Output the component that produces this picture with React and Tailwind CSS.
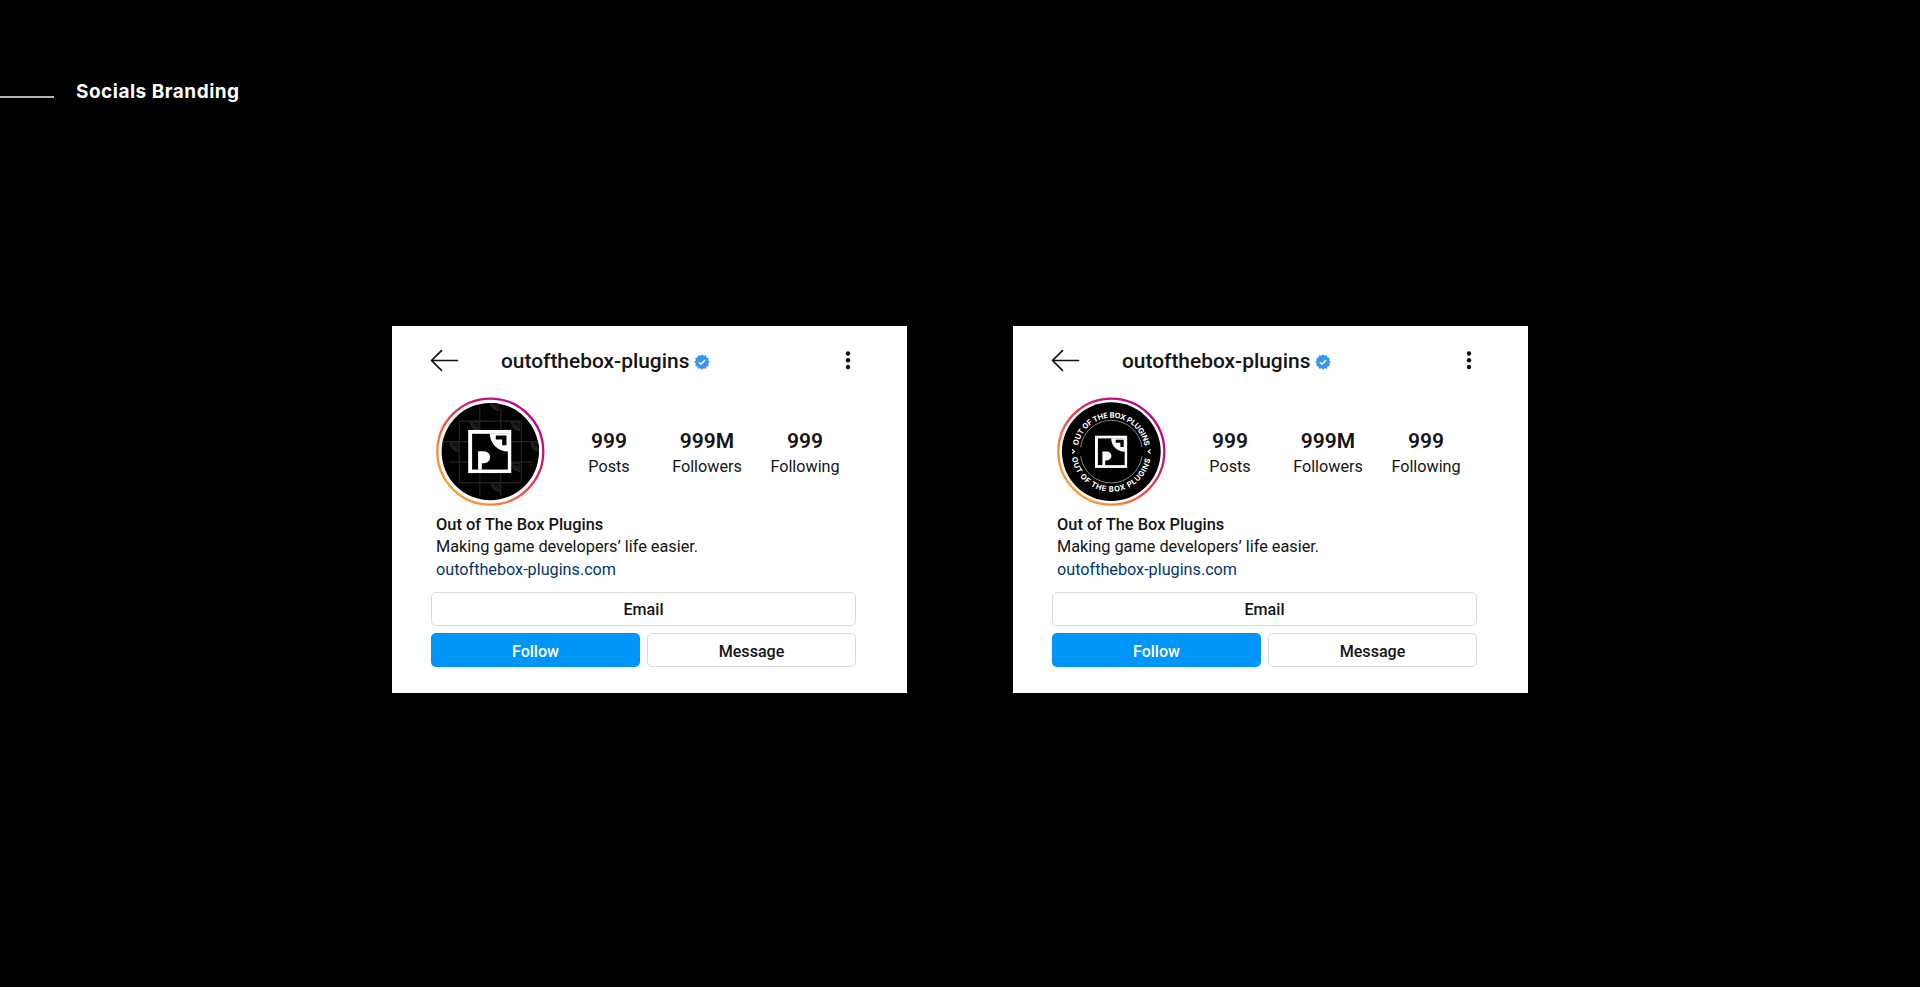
import React from "react";

const profile = {
  handle: "outofthebox-plugins",
  name: "Out of The Box Plugins",
  bio: "Making game developers’ life easier.",
  link: "outofthebox-plugins.com",
};

const stats = [
  { value: "999", label: "Posts", width: "w-[72px]" },
  { value: "999M", label: "Followers", width: "w-[124px]" },
  { value: "999", label: "Following", width: "w-[72px]" },
];

export default function App() {
  return (
    <main className="w-[1920px] h-[987px] overflow-hidden bg-black font-[Roboto,sans-serif]">
      <header className="flex items-start h-[326px] pt-[78px]">
        <div className="w-[54px] h-[2px] mt-[18px] bg-[#b4b4b4]" />
        <h1 className="ml-[22px] mt-px text-[19px] leading-[26px] font-bold tracking-[0.5px] text-white font-[Inter,sans-serif] whitespace-nowrap">
          Socials Branding
        </h1>
      </header>

      <section className="flex gap-[106px] pl-[392px]">
        <ProfileCard id="grid" avatar={<GridAvatar />} />
        <ProfileCard id="badge" avatar={<BadgeAvatar />} />
      </section>
    </main>
  );
}

function ProfileCard({ id, avatar }) {
  return (
    <article className="w-[515px] h-[367px] shrink-0 bg-white text-[#151515] whitespace-nowrap">
      {/* Top bar */}
      <div className="flex items-center h-[70px] pl-[38px] pr-[54px]">
        <BackArrow />
        <span className="ml-[42px] text-[20.9px] leading-[26px] font-medium">{profile.handle}</span>
        <Verified />
        <Dots />
      </div>

      {/* Avatar and numbers */}
      <div className="flex h-[112px] pl-[43px]">
        <svg className="w-[112px] h-[112px] shrink-0" viewBox="-55.3 -55.6 112 112">
          <defs>
            <linearGradient id={`ring-${id}`} x1="0.15" y1="0.9" x2="0.85" y2="0.15">
              <stop offset="0" stopColor="#fba02e" />
              <stop offset="0.25" stopColor="#fb7d3c" />
              <stop offset="0.5" stopColor="#f0404c" />
              <stop offset="0.75" stopColor="#d3126b" />
              <stop offset="1" stopColor="#bd0590" />
            </linearGradient>
          </defs>
          <circle r="53" fill="#fff" stroke={`url(#ring-${id})`} strokeWidth="2.3" />
          {avatar}
        </svg>
        <div className="flex pl-[26px] pt-[32px]">
          {stats.map((s) => (
            <div key={s.label} className={`${s.width} flex flex-col items-center`}>
              <span className="text-[21px] leading-[26px] font-semibold">{s.value}</span>
              <span className="text-[16.2px] leading-[25px]">{s.label}</span>
            </div>
          ))}
        </div>
      </div>

      {/* Bio */}
      <div className="h-[84px] pl-[44px] pt-[6px] text-[16.3px] leading-[22px]">
        <p className="text-[16.4px] font-medium">{profile.name}</p>
        <p>{profile.bio}</p>
        <p className="pt-px text-[16.2px] text-[#00376b]">{profile.link}</p>
      </div>

      {/* Actions */}
      <div className="w-[425px] ml-[39px] grid grid-cols-2 gap-x-[7px] gap-y-[7px] text-[16.1px] font-medium">
        <button className="col-span-2 h-[34px] pt-[2px] rounded-[5px] border border-[#dbdbdb]">Email</button>
        <button className="h-[34px] pt-[4px] rounded-[5px] bg-[#0095f9] text-white">Follow</button>
        <button className="h-[34px] pt-[4px] rounded-[5px] border border-[#dbdbdb]">Message</button>
      </div>
    </article>
  );
}

function BackArrow() {
  return (
    <svg className="w-[29px] h-[24px]" viewBox="0 0 29 24" fill="none" stroke="#111" strokeWidth="1.7" strokeLinecap="round" strokeLinejoin="round">
      <path d="M27.5 11.5H1.5M11.5 1.7L1.5 11.5L11.5 21.3" />
    </svg>
  );
}

function Verified() {
  const points = Array.from({ length: 24 }, (_, i) => {
    const r = i % 2 ? 6.4 : 7.8;
    const a = (i * Math.PI) / 12;
    return `${(r * Math.cos(a)).toFixed(2)},${(r * Math.sin(a)).toFixed(2)}`;
  }).join(" ");
  return (
    <svg className="w-[16px] h-[16px] ml-[5px] mt-[2px]" viewBox="-8 -8 16 16">
      <polygon points={points} fill="#3495f0" />
      <path d="M-3.1 0.3L-1 2.3L3.2 -2" fill="none" stroke="#fff" strokeWidth="1.5" />
    </svg>
  );
}

function Dots() {
  return (
    <svg className="w-[10px] h-[20px] ml-auto" viewBox="-5 -10 10 20" fill="#111">
      <circle cy="-7.5" r="2.2" />
      <circle cy="-0.8" r="2.2" />
      <circle cy="6" r="2.2" />
    </svg>
  );
}

// Brand mark on a 130 unit square
function Logo({ x, y, size }) {
  return (
    <svg x={x} y={y} width={size} height={size} viewBox="0 0 130 130">
      <rect width="130" height="130" fill="#fff" />
      <rect x="12" y="12" width="107" height="107" fill="#000" />
      <path d="M65 11H120V65C90 65 65 42 65 11Z" fill="#fff" />
      <path d="M83 17H115V46H102V29H83Z" fill="#000" />
      <path d="M30 64H48A18 18 0 0 1 48 100H41V120H30Z" fill="#fff" />
    </svg>
  );
}

function GridAvatar() {
  const corners = [[-20, -30], [21, -30], [-40, -9], [21, 11], [1, 31], [0, -50], [41, -9]];
  return (
    <g>
      <clipPath id="grid-clip">
        <circle r="48.7" />
      </clipPath>
      <circle r="48.7" fill="#000" />
      <g clipPath="url(#grid-clip)" fill="none" stroke="#262626" strokeWidth="1.1">
        <path d="M-31 -30.5H31M-49 -10H49M-41 10.5H41M-31 31H31" />
        <path d="M-31 -31V31M-10.5 -44V44M10.5 -44V44M31 -31V31" />
        {corners.map(([x, y]) => (
          <g key={`${x}${y}`} transform={`translate(${x} ${y})`}>
            <path d="M0 0C0 5 4 9 9 9V0Z" fill="#1c1c1c" stroke="none" />
            <path d="M3 2H7V6" stroke="#050505" />
            <path d="M0 0C0 5 4 9 9 9" />
          </g>
        ))}
      </g>
      <Logo x={-22.2} y={-21.8} size={43.4} />
    </g>
  );
}

function BadgeAvatar() {
  return (
    <g>
      <circle r="49.4" fill="#000" />
      <path d="M-31 37H-10M12 37H31M-12 22V46M12 22V46M1 36C1 41 5 44 9 44" fill="none" stroke="#141414" />
      <g fill="none" stroke="#bbb" strokeWidth="0.7">
        <path d="M-30.7 -4.6A31 31 0 0 1 30.7 -4.6" />
        <path d="M-30.7 4.6A31 31 0 0 0 30.7 4.6" />
      </g>
      <path id="badge-top" d="M-33.1 -6A33.6 33.6 0 0 1 33.1 -6" fill="none" />
      <path id="badge-bottom" d="M-39.5 5.8A39.9 39.9 0 0 0 39.5 5.8" fill="none" />
      <g fill="#fff" fontSize="7.6" fontWeight="700" fontFamily="Inter, sans-serif" textRendering="geometricPrecision">
        <text textLength="94">
          <textPath href="#badge-top">OUT OF THE BOX PLUGINS</textPath>
        </text>
        <text textLength="112">
          <textPath href="#badge-bottom">OUT OF THE BOX PLUGINS</textPath>
        </text>
      </g>
      <path d="M-39.2 -2L-37 0L-39.2 2M39.2 -2L37 0L39.2 2" fill="none" stroke="#fff" strokeWidth="1.3" />
      <Logo x={-16.4} y={-16.2} size={32.5} />
    </g>
  );
}
